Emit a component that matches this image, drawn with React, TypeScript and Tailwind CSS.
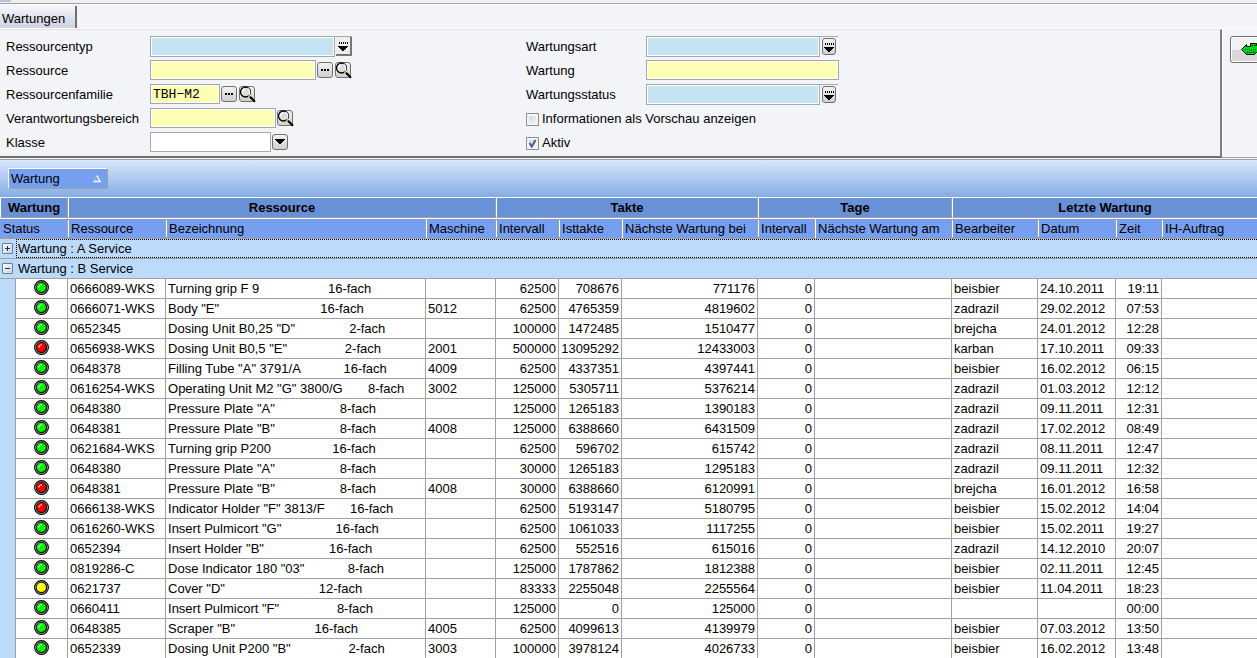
import React from "react";

type Led = "green" | "red" | "yellow";

const rows: [Led, string, string, number, string, string, string, string, string, string, string, string][] = [
  ["green", "0666089-WKS", "Turning grip F 9", 19, "16-fach", "", "62500", "708676", "771176", "beisbier", "24.10.2011", "19:11"],
  ["green", "0666071-WKS", 'Body "E"', 28, "16-fach", "5012", "62500", "4765359", "4819602", "zadrazil", "29.02.2012", "07:53"],
  ["green", "0652345", 'Dosing Unit B0,25 "D"', 15, "2-fach", "", "100000", "1472485", "1510477", "brejcha", "24.01.2012", "12:28"],
  ["red", "0656938-WKS", 'Dosing Unit B0,5 "E"', 16, "2-fach", "2001", "500000", "13095292", "12433003", "karban", "17.10.2011", "09:33"],
  ["green", "0648378", 'Filling Tube "A" 3791/A', 12, "16-fach", "4009", "62500", "4337351", "4397441", "beisbier", "16.02.2012", "06:15"],
  ["green", "0616254-WKS", 'Operating Unit M2 "G" 3800/G', 7, "8-fach", "3002", "125000", "5305711", "5376214", "zadrazil", "01.03.2012", "12:12"],
  ["green", "0648380", 'Pressure Plate "A"', 18, "8-fach", "", "125000", "1265183", "1390183", "zadrazil", "09.11.2011", "12:31"],
  ["green", "0648381", 'Pressure Plate "B"', 18, "8-fach", "4008", "125000", "6388660", "6431509", "zadrazil", "17.02.2012", "08:49"],
  ["green", "0621684-WKS", "Turning grip P200", 17, "16-fach", "", "62500", "596702", "615742", "zadrazil", "08.11.2011", "12:47"],
  ["green", "0648380", 'Pressure Plate "A"', 18, "8-fach", "", "30000", "1265183", "1295183", "zadrazil", "09.11.2011", "12:32"],
  ["red", "0648381", 'Pressure Plate "B"', 18, "8-fach", "4008", "30000", "6388660", "6120991", "brejcha", "16.01.2012", "16:58"],
  ["red", "0666138-WKS", 'Indicator Holder "F" 3813/F', 7, "16-fach", "", "62500", "5193147", "5180795", "beisbier", "15.02.2012", "14:04"],
  ["green", "0616260-WKS", 'Insert Pulmicort "G"', 15, "16-fach", "", "62500", "1061033", "1117255", "beisbier", "15.02.2011", "19:27"],
  ["green", "0652394", 'Insert Holder "B"', 18, "16-fach", "", "62500", "552516", "615016", "zadrazil", "14.12.2010", "20:07"],
  ["green", "0819286-C", 'Dose Indicator 180 "03"', 12, "8-fach", "", "125000", "1787862", "1812388", "beisbier", "02.11.2011", "12:45"],
  ["yellow", "0621737", 'Cover "D"', 26, "12-fach", "", "83333", "2255048", "2255564", "beisbier", "11.04.2011", "18:23"],
  ["green", "0660411", 'Insert Pulmicort "F"', 16, "8-fach", "", "125000", "0", "125000", "", "", "00:00"],
  ["green", "0648385", 'Scraper "B"', 22, "16-fach", "4005", "62500", "4099613", "4139979", "beisbier", "07.03.2012", "13:50"],
  ["green", "0652339", 'Dosing Unit P200 "B"', 16, "2-fach", "3003", "100000", "3978124", "4026733", "beisbier", "16.02.2012", "13:48"],
];

const ledColors = {
  green: ["#00f800", "#009000"],
  red: ["#f80000", "#900000"],
  yellow: ["#ffff00", "#b0a000"],
};

function StatusLed({ color }: { color: Led }) {
  const [main, dark] = ledColors[color];
  return (
    <svg width="15" height="15" viewBox="0 0 15 15" className="mx-auto mb-0.5 block" role="img" aria-label={color}>
      <circle cx="7.5" cy="7.5" r="6.9" fill="#c0c0c0" stroke="#000" strokeWidth="1.1" />
      <circle cx="7.5" cy="7.5" r="5.2" fill={dark} stroke="#000" strokeWidth="1.1" />
      <circle cx="7.2" cy="7.2" r="4.5" fill={main} />
      <path d="M5 7.500V6L6.500 5H8" stroke="#fff" fill="none" />
    </svg>
  );
}

const iconButton =
  "flex size-4 shrink-0 items-center justify-center rounded-[3px] border border-[#707070] bg-linear-to-b from-[#f4f4f4] to-[#cfcfcf]";

function DotsButton({ label }: { label: string }) {
  return (
    <button type="button" aria-label={label} className={iconButton}>
      <svg width="14" height="14" viewBox="0 0 14 14" shapeRendering="crispEdges">
        <path d="M3 6h2v2H3zM6 6h2v2H6zM9 6h2v2H9z" fill="#000" />
      </svg>
    </button>
  );
}

function SearchButton({ label }: { label: string }) {
  return (
    <button type="button" aria-label={label} className={iconButton}>
      <svg width="16" height="16" viewBox="0 0 16 16" className="shrink-0 overflow-visible">
        <circle cx="6.5" cy="6" r="5" fill="#dcdcdc" stroke="#000" strokeWidth="1.3" />
        <path d="M8.500 2.200A4.300 4.300 0 0 1 9.500 9" stroke="#f4f4f4" strokeWidth="1.4" fill="none" />
        <path d="M3.500 6A3 3 0 0 1 6 3" stroke="#fff" strokeWidth="1.4" fill="none" />
        <path d="M9.800 9.500l1.600 1.600" stroke="#e8d800" strokeWidth="2" />
        <path d="M11 10.800l5 5" stroke="#000" strokeWidth="2.200" />
      </svg>
    </button>
  );
}

function DropIcon({ dots }: { dots?: boolean }) {
  return (
    <svg width="14" height="14" viewBox="0 0 14 14" shapeRendering="crispEdges" className="shrink-0">
      {dots && <path d="M3 3h1v2H3zM5 3h1v2H5zM7 3h1v2H7zM9 3h1v2H9zM11 3h1v2h-1z" fill="#000" />}
      <path d={dots ? "M2 7h10v1h-1v1h-1v1H9v1H8v1H6v-1H5v-1H4V9H3V8H2z" : "M2 4h10v1h-1v1h-1v1H9v1H8v1H6V8H5V7H4V6H3V5H2z"} fill="#000" />
    </svg>
  );
}

const field = "border border-[#a5a7b0] px-0.5 font-['Liberation_Mono',monospace] text-[13px] outline-none inset-ring inset-ring-white";

function Row({ id, label, children }: { id: string; label: string; children: React.ReactNode }) {
  return (
    <div className="flex h-6 items-center">
      <label htmlFor={id} className="shrink-0 grow-0 basis-36 pt-0.5 whitespace-nowrap in-[.right-fields]:basis-30">
        {label}
      </label>
      {children}
    </div>
  );
}

function Combo({ id, raised, className }: { id: string; raised?: boolean; className: string }) {
  return (
    <div className="flex items-center border-t border-[#a5a7b0]">
      <input id={id} type="text" className={`${field} h-5 border-t-0 bg-[#c5e4f3] ${className}`} />
      <button
        type="button"
        aria-label="Liste öffnen"
        className={
          raised
            ? "ml-px flex h-[19px] w-4 items-center justify-center border-r-2 border-b-2 border-[#777] bg-[#eee]"
            : "mx-0.5 flex h-[17px] w-[14px] items-center justify-center rounded-[3px] border border-[#707070] bg-linear-to-b from-[#f4f4f4] to-[#cfcfcf]"
        }
      >
        <DropIcon dots />
      </button>
    </div>
  );
}

function Check({ id, label, checked }: { id: string; label: string; checked?: boolean }) {
  return (
    <div className="flex h-6 items-center gap-[3px] pt-0.5">
      <span className="grid">
        <input
          id={id}
          type="checkbox"
          defaultChecked={checked}
          className="peer col-start-1 row-start-1 size-[13px] appearance-none border border-[#8e8f8f] bg-linear-to-br from-[#c9ccd2] to-white inset-ring-2 inset-ring-[#f4f4f4]"
        />
        <svg
          width="13"
          height="13"
          viewBox="0 0 13 13"
          className="pointer-events-none invisible col-start-1 row-start-1 peer-checked:visible"
        >
          <path d="M3.500 6l2.300 3.500L9.500 3" fill="none" stroke="#465a9c" strokeWidth="2" />
        </svg>
      </span>
      <label htmlFor={id}>{label}</label>
    </div>
  );
}

function FilterPanel() {
  return (
    <section className="flex min-h-0 shrink-0 overflow-hidden border-t border-[#a0a0a0]">
      <div className="min-w-0 flex-1 border-t border-white">
        <div className="flex h-6 items-end border-b border-white">
          <button
            type="button"
            className="h-[22px] w-[77px] border-r-2 border-[#707070] bg-linear-to-b from-[#f6f7fa] to-[#cdd1e2] pt-1 pl-0.5 text-left"
          >
            Wartungen
          </button>
        </div>
        <form className="flex border-t border-r-2 border-b-2 border-t-[#e2e4d8] border-r-[#808080] border-b-[#707070] pt-1 pb-0.5 pl-1.5">
          <div className="w-[520px] shrink-0">
            <Row id="ressourcentyp" label="Ressourcentyp">
              <Combo id="ressourcentyp" raised className="w-[185px]" />
            </Row>
            <Row id="ressource" label="Ressource">
              <input id="ressource" type="text" className={`${field} mr-px h-5 w-[166px] bg-[#feffb2]`} />
              <DotsButton label="Ressource wählen" />
              <span className="w-0.5" />
              <SearchButton label="Ressource suchen" />
            </Row>
            <Row id="familie" label="Ressourcenfamilie">
              <input id="familie" type="text" defaultValue="TBH−M2" className={`${field} mr-px h-5 w-[70px] bg-[#feffb2]`} />
              <DotsButton label="Familie wählen" />
              <span className="w-0.5" />
              <SearchButton label="Familie suchen" />
            </Row>
            <Row id="bereich" label="Verantwortungsbereich">
              <input id="bereich" type="text" className={`${field} mr-px h-5 w-[126px] bg-[#feffb2]`} />
              <SearchButton label="Bereich suchen" />
            </Row>
            <Row id="klasse" label="Klasse">
              <input id="klasse" type="text" className={`${field} mr-px h-5 w-[121px] bg-white`} />
              <button type="button" aria-label="Klasse wählen" className={iconButton}>
                <DropIcon />
              </button>
            </Row>
          </div>
          <div className="right-fields">
            <Row id="wartungsart" label="Wartungsart">
              <Combo id="wartungsart" className="w-[174px]" />
            </Row>
            <Row id="wartung" label="Wartung">
              <input id="wartung" type="text" className={`${field} h-5 w-[193px] bg-[#feffb2]`} />
            </Row>
            <Row id="wartungsstatus" label="Wartungsstatus">
              <Combo id="wartungsstatus" className="w-[174px]" />
            </Row>
            <Check id="vorschau" label="Informationen als Vorschau anzeigen" />
            <Check id="aktiv" label="Aktiv" checked />
          </div>
        </form>
      </div>
      <div className="flex w-[35px] shrink-0 flex-col border-t border-b border-t-white border-b-[#a0a0a0]">
        <div className="h-6 border-b border-white" />
        <div className="flex-1 border-l border-white pt-[7px] pl-[7px]">
          <button
            type="button"
            aria-label="Zurück"
            className="flex h-[27px] w-12 items-center rounded-[3px] border border-[#707070] bg-linear-to-b from-[#f2f2f2] from-50% to-[#d8d8d8] to-50% pl-2.5 inset-ring inset-ring-white"
          >
            <svg width="26" height="15" viewBox="0 0 26 15" className="shrink-0">
              <path d="M.5 7.500l5-5v2h4v-3h6v2h9v7h-9l-2 2h-8z" fill="#00d820" stroke="#000" />
              <path d="M10 3.500h5M5.500 10.500h10" stroke="#004800" strokeDasharray="2 1" />
              <path d="M4 7.500h11M6 9h9" stroke="#008018" strokeDasharray="1 1" />
            </svg>
          </button>
        </div>
      </div>
    </section>
  );
}

const columns = ["Ressource", "Bezeichnung", "Maschine", "Intervall", "Isttakte", "Nächste Wartung bei", "Intervall", "Nächste Wartung am", "Bearbeiter", "Datum", "Zeit", "IH-Auftrag"];
const lastOfGroup = [2, 5, 7];

const groupHead = "h-[21px] border-t border-r border-b border-l border-t-white border-l-white border-r-[#a0a0a0] border-b-[#a0a0a0] bg-[#6991d8] p-0 text-center font-bold";
const subHead = "h-[21px] border-t border-b border-t-white border-b-[#a0a0a0] bg-[#779ff0] p-0 text-left font-normal whitespace-nowrap";
const cell = "h-5 overflow-hidden border-r border-b border-[#a0a0a0] p-0 px-0.5 whitespace-pre";

function GroupRow({ name, open }: { name: string; open?: boolean }) {
  return (
    <tr className="bg-[#bcdafa]">
      <td colSpan={14} className="h-5 border-b border-[#a0a0a0] p-0">
        <div className="flex h-[19px] items-center">
          <button
            type="button"
            aria-label={name}
            className="mr-[3px] ml-0.5 flex size-[11px] shrink-0 items-center justify-center rounded-[1px] border border-[#6b7f9c] bg-linear-to-br from-white to-[#c4d4e8]"
          >
            <svg width="9" height="9" viewBox="0 0 9 9" shapeRendering="crispEdges">
              <path d={open ? "M2 4h5v1H2z" : "M2 4h5v1H2zM4 2h1v5H4z"} fill="#203060" />
            </svg>
          </button>
          <span className={open ? "flex-1 pl-0.5" : "h-[19px] flex-1 border border-r-0 border-dotted border-black pl-px leading-[17px]"}>
            {name}
          </span>
        </div>
      </td>
    </tr>
  );
}

export default function App() {
  return (
    <main className="flex h-screen flex-col overflow-hidden bg-[#f3f4f8] font-['Liberation_Sans',Arial,sans-serif] text-[13px] leading-4 text-black">
      <div className="h-[3px] shrink-0 bg-[#f0f0f0]">
        <div className="h-0.5 w-[11px] bg-[#b8c4de]" />
      </div>
      <FilterPanel />

      <div className="mt-px flex h-[38px] shrink-0 items-center border-t border-[#a0a0a0] bg-linear-to-b from-[#d9e7fb] to-[#84ace6] pl-2">
        <button
          type="button"
          className="flex h-[21px] w-[100px] items-center justify-between border border-t-white border-r-[#a0a0a0] border-b-[#a0a0a0] border-l-white bg-[#779ff0] pr-1.5 pl-0.5"
        >
          Wartung
          <svg width="8" height="8" viewBox="0 0 8 8">
            <path d="M3.500 1L.8 6.500" stroke="#b8b8b8" fill="none" />
            <path d="M4 .5l3 6H.5" stroke="#fff" strokeWidth="1.4" fill="none" />
          </svg>
        </button>
      </div>

      <table className="w-full table-fixed border-separate border-spacing-0">
        <colgroup>
          <col className="w-4" />
          <col className="w-[52px]" />
          <col className="w-[98px]" />
          <col className="w-[260px]" />
          <col className="w-[70px]" />
          <col className="w-[63px]" />
          <col className="w-[63px]" />
          <col className="w-[136px]" />
          <col className="w-[57px]" />
          <col className="w-[137px]" />
          <col className="w-[86px]" />
          <col className="w-[78px]" />
          <col className="w-[46px]" />
          <col />
        </colgroup>
        <thead>
          <tr>
            <th colSpan={2} className={groupHead}>Wartung</th>
            <th colSpan={3} className={groupHead}>Ressource</th>
            <th colSpan={3} className={groupHead}>Takte</th>
            <th colSpan={2} className={groupHead}>Tage</th>
            <th colSpan={4} className={`${groupHead} border-r-0`}>Letzte Wartung</th>
          </tr>
          <tr>
            <th colSpan={2} className={`${subHead} border-r border-r-[#a0a0a0]`}>
              <div className="pl-[3px]">Status</div>
            </th>
            {columns.map((name, i) => (
              <th key={i} className={subHead}>
                <div
                  className={
                    (lastOfGroup.includes(i) ? "h-[19px] py-px" : "h-[17px]") +
                    " border-l border-l-white pl-0.5 leading-[17px] " +
                    (i < 11 ? "border-r border-r-[#a0a0a0]" : "")
                  }
                >
                  {name}
                </div>
              </th>
            ))}
          </tr>
        </thead>
        <tbody>
          <GroupRow name="Wartung : A Service" />
          <GroupRow name="Wartung : B Service" open />
          {rows.map(([led, resource, title, gap, cavities, machine, interval, actual, next, editor, date, time], i) => (
            <tr key={i} className="bg-white">
              <td className="border-r border-[#a0a0a0] bg-[#bcdafa] p-0" />
              <td className={cell}>
                <StatusLed color={led} />
              </td>
              <td className={cell}>{resource}</td>
              <td className={cell}>{title + " ".repeat(gap) + cavities}</td>
              <td className={cell}>{machine}</td>
              <td className={`${cell} text-right`}>{interval}</td>
              <td className={`${cell} text-right`}>{actual}</td>
              <td className={`${cell} text-right`}>{next}</td>
              <td className={`${cell} text-right`}>0</td>
              <td className={cell} />
              <td className={cell}>{editor}</td>
              <td className={cell}>{date}</td>
              <td className={`${cell} text-right`}>{time}</td>
              <td className={`${cell} border-r-0`} />
            </tr>
          ))}
        </tbody>
      </table>
    </main>
  );
}
